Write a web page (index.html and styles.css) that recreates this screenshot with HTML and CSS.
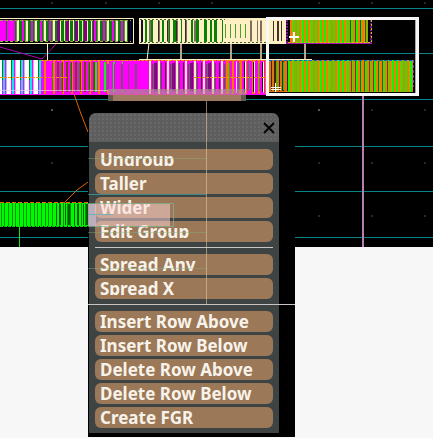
FILE: index.html
```html
<!DOCTYPE html>
<html lang="en">
<head>
<meta charset="utf-8">
<title>Floorplan editor</title>
<link rel="stylesheet" href="styles.css">
</head>
<body>
<main class="editor">
  <svg class="canvas" viewBox="0 0 433 247" preserveAspectRatio="xMinYMin slice" aria-hidden="true">
    <defs>
      <pattern id="mesh" width="9" height="30" patternUnits="userSpaceOnUse">
        <path fill="#12f400" d="M0 0h9v30H0z"/><path fill="#f47a08" d="M2 0h2v30H2zM7 0h2v30H7z"/><path fill="#b9a80c" d="M4 0h1v30H4z"/>
      </pattern>
      <pattern id="leaf" width="9" height="30" patternUnits="userSpaceOnUse">
        <path fill="#087c08" d="M0 0h9v30H0z"/><path fill="#fff0c4" d="M8 0h1v30H8zM0 0h1v30H0z"/><path fill="#f400f4" d="M4 0h2v30H4z"/><path fill="#6b8a50" d="M7 0h1v30H7z"/>
      </pattern>
      <pattern id="ice" width="9" height="40" patternUnits="userSpaceOnUse">
        <path fill="#fff" d="M0 0h9v40H0z"/><path fill="#0ee" d="M3 0h2v40H3z"/><path fill="#f0f" d="M5 0h1v40H5zM2 0h1v20H2z"/><path fill="#087c08" d="M2 20h1v20H2z"/><path fill="#d9a9e6" d="M6 0h1v40H6z"/>
      </pattern>
      <pattern id="lime" width="11" height="30" patternUnits="userSpaceOnUse">
        <path fill="#00fa00" d="M0 0h11v30H0z"/><path fill="#009000" d="M1 0h1v30H1zM4 0h1v30H4zM8 0h1v30H8z"/>
      </pattern>
    </defs>
    <path fill="#000" d="M0 0h2000v247H0z"/>
    <path stroke="#078487" d="M0 8.500h2000M0 53.500h2000M0 99.500h2000M0 146.500h2000M0 191.500h2000M0 237.500h2000"/>
    <path stroke="#555" stroke-width="2" d="M51 110h2M318 110h2"/>
    <path stroke="#252830" stroke-width="2" d="M51 3h2M105 3h2M158 3h2M211 3h2M318 3h2M371 3h2M424 3h2M105 103h2M155 103h2M205 103h2M256 103h2M371 110h2M424 110h2M51 163h2M318 163h2M371 163h2M424 163h2M318 216h2M371 216h2M424 216h2"/>

    <g fill="none">
      <path stroke="#b000b0" d="M0 47l42 12 15-16"/>
      <path stroke="#dd6500" d="M74 94l7 20 7 18M88 182l-11 8-13 13"/>
      <path stroke="#fff0c4" d="M47.500 43v17M149 43l-2 17"/>
      <path stroke="#b7a58a" stroke-width="2" d="M181 43v17M231 43v17M261 43v17M305 43v17"/>
      <path stroke="#b681b0" stroke-width="2" d="M363 95v152"/>
      <path stroke="#16e316" d="M19.500 226v21"/>
    </g>

    <!-- upper row, left cell -->
    <path fill="url(#leaf)" d="M0 20h58v21H0z"/>
    <path stroke="#f0f" stroke-width="21" stroke-dasharray="5 2 6 100" d="M0 30.500h15"/>
    <path fill="#087c08" d="M58 20h40v21H58z"/>
    <path stroke="#800080" stroke-width="21" stroke-dasharray="4 5" d="M57 30.500h37"/>
    <path stroke="#fff0c4" stroke-width="21" stroke-dasharray="1 3 1 4" d="M60 30.500h37"/>
    <path fill="url(#leaf)" d="M94 20h34v21H94z"/>
    <path stroke="#000070" d="M130.500 20v21"/>
    <path fill="none" stroke="#fff0c4" d="M0 18.500h133.500v25H0"/>
    <path stroke="#95ad36" stroke-dasharray="3 2" d="M0 20.500h131M0 41.500h131"/>

    <!-- upper row, middle cell -->
    <path fill="#fff0c4" d="M139 18h128v26H139z"/>
    <path stroke="#151238" stroke-width="2" d="M142 20v22"/>
    <path stroke="#078207" stroke-width="22" stroke-dasharray="2 3 3 5 1 3 2 4" d="M145 31h49"/>
    <path stroke="#806b65" stroke-width="21" stroke-dasharray="2 7" d="M149 31h47"/>
    <path stroke="#332a28" stroke-width="21" stroke-dasharray="1 8" d="M158 31h35"/>
    <path stroke="#078207" stroke-width="22" stroke-dasharray="3 5 3 3 2 2" d="M196 31h27"/>
    <path stroke="#4ba033" stroke-width="14" stroke-dasharray="1 4" d="M225 31h24"/>
    <path stroke="#806b65" stroke-width="21" stroke-dasharray="2 5 1 2" d="M250 31h17"/>
    <path stroke="#3f652a" stroke-dasharray="2 2" d="M140 19.500h85M140 42.500h127"/>

    <!-- lower row -->
    <path fill="url(#ice)" d="M0 60h41v34H0z"/>
    <path fill="#f0f" d="M41 60h226v34H41z"/>
    <path stroke="#f57900" stroke-width="34" stroke-dasharray="2 7" d="M44 77h72"/>
    <path stroke="#7a3e16" stroke-width="30" stroke-dasharray="2 3 1 3" d="M57 77h38"/>
    <path stroke="#159715" stroke-width="28" stroke-dasharray="1 8" d="M52 77h40"/>
    <path stroke="#15ef15" stroke-width="30" stroke-dasharray="2 7" d="M95 77h28"/>
    <path stroke="#785070" stroke-width="26" stroke-dasharray="2 5 1 6" d="M107 77h32"/>
    <path stroke="#fff0c4" stroke-width="34" stroke-dasharray="2 7" d="M149 77h76"/>
    <path stroke="#781278" stroke-width="28" stroke-dasharray="2 5 1 10" d="M154 77h71"/>
    <path stroke="#138213" stroke-width="25" stroke-dasharray="1 8" d="M152 77h73"/>
    <path stroke="#58104b" stroke-width="29" stroke-dasharray="1 8" d="M156 77h65"/>
    <path stroke="#f57900" stroke-width="34" stroke-dasharray="3 3 2 5" d="M226 77h41"/>
    <path stroke="#16ba16" stroke-width="28" stroke-dasharray="1 9" d="M229 77h38"/>
    <path stroke="#fff" stroke-width="31" stroke-dasharray="1 8" d="M236 77h31"/>
    <path stroke="#291417" stroke-width="30" stroke-dasharray="1 8" d="M244 77h23"/>
    <path stroke="#ff8c00" stroke-dasharray="3 1" d="M41 60.500h226M0 77.500h67M194 77.500h73"/>
    <path stroke="#fff0c4" d="M139 59.500h173"/>
    <path stroke="#e9c9e6" stroke-opacity=".7" d="M0 90.500h108"/>
    <path stroke="#f0f" d="M0 94.500h267"/>

    <!-- selected group -->
    <path fill="#fff0c4" d="M269 20h17v24h-17z"/>
    <path stroke="#403129" stroke-width="20" stroke-dasharray="1 3 2 2" d="M273 31h12"/>
    <path fill="url(#mesh)" d="M290 20h78v23H290zM288 60h125v32H288z"/>
    <path stroke="#6b3b08" stroke-width="22" stroke-dasharray="1 4" d="M350 31h18"/>
    <path stroke="#763d08" stroke-width="31" stroke-dasharray="1 3 1 4" d="M351 76h38"/>
    <path fill="#d97812" d="M269 60h19v32h-19z"/>
    <path stroke="#3b260e" stroke-width="30" stroke-dasharray="1 2 2 3" d="M271 76h17"/>
    <path stroke="#18cb00" stroke-width="28" stroke-dasharray="1 6" d="M276 76h12"/>
    <path stroke="#7a118b" stroke-width="2" stroke-dasharray="2 1" d="M287 20v23M371 20v23"/>
    <path stroke="#a813aa" d="M286 43.500h86"/>
    <path stroke="#d5bd19" stroke-dasharray="2 2" d="M288 42.500h83M371.500 20v22"/>
    <path stroke="#0966df" stroke-dasharray="3 2" d="M269 60.500h145M413.500 60v27"/>
    <path fill="none" stroke="#aaa" d="M415.500 20v73"/>
    <path fill="none" stroke="#f7f7f7" stroke-width="3" d="M267.500 18.500h150v76h-150z"/>
    <path stroke="#fff" stroke-width="2" d="M289 37h10M294 32v10"/>
    <path stroke="#fff" d="M271 87.500h10M271 89.500h10M275.500 83v9"/>

    <!-- drop shadow of the docked cell -->
    <path fill="#a9958a" fill-opacity=".65" d="M108 89h138v6H108z"/>
    <path fill="#9e7b60" d="M113 95h128v6H113z"/>
    <path fill="#665a50" d="M108 95h5v6h-5zM241 95h5v6h-5z"/>
    <path stroke="#d75aa0" d="M113 94.500h125"/>

    <!-- lower left cell -->
    <path fill="url(#lime)" d="M0 203h88v23H0z"/>
    <path stroke="#005b00" stroke-width="21" stroke-dasharray="1 2 2 4" d="M56 214.500h32"/>
    <path stroke="#e16b00" stroke-dasharray="4 2" d="M0 202.500h88"/>
    <path stroke="#00d900" stroke-dasharray="3 1" d="M0 226.500h88"/>
  </svg>

  <section class="dock" aria-label="Group actions">
    <div class="panel">
      <header class="panel-head">
        <button class="close" type="button" aria-label="Close">
          <svg class="close-icon" viewBox="0 0 12 12" aria-hidden="true"><path d="M1 1l10 10M11 1L1 11"/></svg>
        </button>
      </header>
      <div class="panel-body">
        <div class="group">
          <button class="action" type="button"><span class="label">Ungroup</span></button>
          <button class="action" type="button"><span class="label">Taller</span></button>
          <button class="action" type="button"><span class="label">Wider</span></button>
          <button class="action" type="button"><span class="label">Edit Group</span></button>
        </div>
        <hr class="rule">
        <div class="group">
          <button class="action" type="button"><span class="label">Spread Any</span></button>
          <button class="action" type="button"><span class="label">Spread X</span></button>
        </div>
        <hr class="rule">
        <div class="group">
          <button class="action" type="button"><span class="label">Insert Row Above</span></button>
          <button class="action" type="button"><span class="label">Insert Row Below</span></button>
          <button class="action" type="button"><span class="label">Delete Row Above</span></button>
          <button class="action" type="button"><span class="label">Delete Row Below</span></button>
          <button class="action" type="button"><span class="label">Create FGR</span></button>
        </div>
      </div>
    </div>
    <svg class="traces" viewBox="0 0 207 336" aria-hidden="true">
      <path fill="#ffd8d8" fill-opacity=".5" d="M0 103h82v22H0z"/>
      <path fill="#e8ddff" fill-opacity=".4" d="M0 103h8v22H0z"/>
      <path fill="none" stroke="#80b394" stroke-opacity=".7" d="M0 102.500h85.500v23H0"/>
      <path stroke="#a884b5" stroke-dasharray="2 2" stroke-opacity=".5" d="M8 118.500h74"/>
      <path stroke="#39b8c0" stroke-opacity=".6" d="M0 93.500h118M0 113.500h25"/>
      <path stroke="#81b783" stroke-opacity=".4" d="M0 57.500h118M0 131.500h118M0 167.500h118"/>
      <path stroke="#e0c49a" stroke-opacity=".6" d="M118.500 0v203"/>
      <path stroke="#c9c5c4" d="M0 203.500h207"/>
    </svg>
  </section>
</main>
</body>
</html>
```
FILE: styles.css
```css
* {
  box-sizing: border-box;
}

body {
  margin: 0;
  background: #f7f7f7;
  font-family: "Noto Sans", "Open Sans", sans-serif;
}

.editor {
  position: relative;
  min-height: 100vh;
}

.canvas {
  display: block;
  width: 100%;
  height: 247px;
}

.dock {
  position: absolute;
  top: 101px;
  left: 88px;
  width: 207px;
  padding: 12px 16px 4px 1px;
  background: #000;
}

.panel {
  overflow: hidden;
  border-radius: 7px 7px 0 0;
  background: #3d4443;
}

.panel-head {
  display: flex;
  align-items: center;
  justify-content: flex-end;
  height: 29px;
  padding: 0 4px;
  background: radial-gradient(#686868 1px, #5e5e5e 1px) 0 0 / 4px 4px;
}

.close {
  display: flex;
  padding: 0;
  border: 0;
  background: none;
}

.close-icon {
  width: 12px;
  height: 12px;
  fill: none;
  stroke: #050505;
  stroke-width: 2;
}

.panel-body {
  padding: 7px 6px 5px;
}

.group {
  display: grid;
  gap: 3px;
}

.rule {
  height: 1px;
  margin: 5px 0 6px;
  border: 0;
  background: #c9c5c4;
}

.action {
  height: 21px;
  padding: 0 5px;
  border: 0;
  border-radius: 6px;
  background: #9b7858;
  color: #f8f3ea;
  font: bold 17px/21px "Noto Sans", "Open Sans", sans-serif;
  text-align: left;
}

.label {
  display: block;
  height: 17px;
  margin-bottom: 4px;
  overflow: hidden;
  line-height: 22px;
  white-space: nowrap;
}

.traces {
  position: absolute;
  top: 0;
  left: 0;
  width: 207px;
  height: 336px;
  pointer-events: none;
}
```
